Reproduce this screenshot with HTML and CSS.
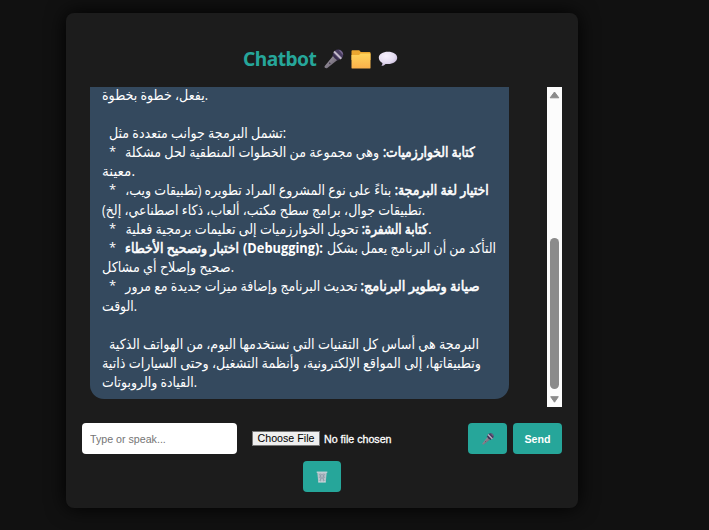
FILE: index.html
```
<!DOCTYPE html>
<html lang="en">
<head>
<meta charset="utf-8">
<title>Chatbot</title>
<link rel="stylesheet" href="styles.css">
</head>
<body>
<svg width="0" height="0" class="defs" aria-hidden="true">
  <defs>
    <linearGradient id="folder" x1="0" y1="0" x2="0" y2="1"><stop offset="0" stop-color="#ffd45c"/><stop offset="1" stop-color="#fbb04a"/></linearGradient>
    <radialGradient id="speech" cx=".4" cy=".3" r=".75"><stop offset="0" stop-color="#f7f1fd"/><stop offset=".6" stop-color="#e4dcf0"/><stop offset="1" stop-color="#bfaed2"/></radialGradient>
    <linearGradient id="handle" x1="0" y1="0" x2="1" y2="1"><stop offset="0" stop-color="#aaa2ad"/><stop offset="1" stop-color="#5f5866"/></linearGradient>
    <symbol id="mic" viewBox="0 0 20 20">
      <path d="M.6 17.3 9.2 6.8l4.2 4.1L3 19.2c-1 .6-3-.7-2.4-1.9z" fill="url(#handle)"/>
      <path d="M5.2 13.7l1.1 1" stroke="#423a4c" stroke-width="1.2"/>
      <circle cx="14.2" cy="5.6" r="5.1" fill="#493d61"/>
      <path d="M14.5.8a5 5 0 0 1 4.6 5.1l-1.7-1.6z" fill="#7a6b91"/>
      <path d="M10 2.5l7.3 7.3" stroke="#c4bacb" stroke-width="2"/>
      <path d="M8.8 5.6l5.5 5.7" stroke="#382c4c" stroke-width="1.6"/>
    </symbol>
  </defs>
</svg>
<main class="card">
  <h1 class="title"><span class="name">Chatbot</span>
    <svg class="i-mic" width="20" height="20"><use href="#mic"/></svg>
    <svg class="i-folder" width="20" height="19" viewBox="0 0 20 19"><path d="M.5 1.200Q.5.300 1.400.300h6.800l1.600 1.700h8.800q.9 0 .9.9V10H.5z" fill="#eba630"/><path d="M.5 5h7.500l1.600-1.500h9.900v14.600q0 .4-.4.400H.9q-.4 0-.4-.4z" fill="url(#folder)"/></svg>
    <svg class="i-speech" width="20" height="16" viewBox="0 0 20 16"><path d="M10 .8c5.2 0 9.2 2.5 9.2 6s-4 6.3-9.2 6.3c-.8 0-1.700-.1-2.400-.2C6.500 14.200 5 14.900 3.400 14.900c.7-.8 1.100-1.800 1-2.900C2.200 10.900.8 9 .8 6.800c0-3.500 4-6 9.200-6z" fill="url(#speech)"/></svg>
  </h1>
  <section class="chat">
    <div class="bubble">
      <p class="line"><span class="run" data-width="106">يفعل، خطوة بخطوة.</span></p>
      <p class="line"></p>
      <p class="line indent"><span class="run" data-width="177">تشمل البرمجة جوانب متعددة مثل:</span></p>
      <p class="line indent"><i>*</i><span class="rtl"><b class="run" data-width="92">كتابة الخوارزميات:</b><span class="run" data-width="254">وهي مجموعة من الخطوات المنطقية لحل مشكلة</span></span></p>
      <p class="line"><span class="run" data-width="33">معينة.</span></p>
      <p class="line indent"><i>*</i><span class="rtl"><b class="run" data-width="94">اختيار لغة البرمجة:</b><span class="run" data-width="266">بناءً على نوع المشروع المراد تطويره (تطبيقات ويب،</span></span></p>
      <p class="line"><span class="run" data-width="323">تطبيقات جوال، برامج سطح مكتب، ألعاب، ذكاء اصطناعي، إلخ)&rlm;.</span></p>
      <p class="line indent"><i>*</i><span class="rtl"><b class="run" data-width="66">كتابة الشفرة:</b><span class="run" data-width="233">تحويل الخوارزميات إلى تعليمات برمجية فعلية</span></span><span>.</span></p>
      <p class="line indent"><i>*</i><b class="run" data-width="114">اختبار وتصحيح الأخطاء</b><b class="run latin" data-width="80">(Debugging):</b><span class="run" data-width="169">التأكد من أن البرنامج يعمل بشكل</span></p>
      <p class="line"><span class="run" data-width="132">صحيح وإصلاح أي مشاكل.</span></p>
      <p class="line indent"><i>*</i><span class="rtl"><b class="run" data-width="119">صيانة وتطوير البرنامج:</b><span class="run" data-width="232">تحديث البرنامج وإضافة ميزات جديدة مع مرور</span></span></p>
      <p class="line"><span class="run" data-width="35">الوقت.</span></p>
      <p class="line"></p>
      <p class="line indent"><span class="run" data-width="370">البرمجة هي أساس كل التقنيات التي نستخدمها اليوم، من الهواتف الذكية</span></p>
      <p class="line"><span class="run" data-width="379">وتطبيقاتها، إلى المواقع الإلكترونية، وأنظمة التشغيل، وحتى السيارات ذاتية</span></p>
      <p class="line"><span class="run" data-width="95">القيادة والروبوتات.</span></p>
    </div>
    <div class="scrollbar">
      <svg width="11" height="8" viewBox="0 0 11 8"><path d="M5.500 1 9.800 6.800H1.200z" fill="#8b8b8b" stroke="#8b8b8b" stroke-linejoin="round"/></svg>
      <div class="thumb"></div>
      <svg width="9" height="7" viewBox="0 0 9 7"><path d="M4.500 6.200.700.700h7.600z" fill="#8b8b8b" stroke="#8b8b8b" stroke-linejoin="round"/></svg>
    </div>
  </section>
  <div class="controls">
    <input class="message" type="text" placeholder="Type or speak...">
    <div class="file"><button class="choose">Choose File</button><span class="status">No file chosen</span></div>
    <button class="btn voice"><svg width="12" height="12"><use href="#mic"/></svg></button>
    <button class="btn send">Send</button>
  </div>
  <button class="btn clear"><svg width="12" height="12" viewBox="0 0 12 12"><path d="M1.300 1.500h9.400L9.700 11.300H2.300z" fill="#b9c3cb"/><path d="M3 3l5.500 7M6 3l3 4M9 3l-5.500 7M6 3L3 7M4.200 2.500l.5 8.500M7.800 2.500l-.5 8.500" stroke="#8795a3" stroke-width=".6"/><path d="M.7 1.200h10.600" stroke="#d8d4dc" stroke-width="1.200"/><path d="M2.200 11h7.600" stroke="#d8dfe4" stroke-width=".8"/></svg></button>
</main>
<script src="fit.js"></script>
</body>
</html>
```
FILE: fit.js
```
// Condense each run of text to its set width.
document.querySelectorAll(".run").forEach(function (run) {
  var width = Number(run.dataset.width);
  var text = document.createElement("span");
  text.className = "text";
  text.append(...run.childNodes);
  run.append(text);
  var scale = width / text.getBoundingClientRect().width;
  run.style.width = width + "px";
  text.style.transform = "scaleX(" + scale + ")";
});
```
FILE: styles.css
```
* { box-sizing: border-box; }
body {
  margin: 0;
  height: 530px;
  overflow: hidden;
  background: #111;
  color: #fff;
  font-family: "Open Sans", "Noto Sans", "DejaVu Sans", sans-serif;
}
.defs { position: absolute; }
.card {
  width: 512px;
  height: 495px;
  margin: 13px 0 0 66px;
  padding: 33px 16px 16px;
  background: #1c1c1c;
  border-radius: 8px;
  box-shadow: 0 0 20px #000;
}
.title {
  display: flex;
  align-items: flex-start;
  height: 41px;
  margin: 0;
  padding-left: 161px;
  color: #26a69a;
  font: bold 19.2px/26px "Noto Sans", "Open Sans", sans-serif;
}
.name { width: 81px; white-space: nowrap; letter-spacing: -.55px; }
.i-mic { margin-top: 3px; }
.i-folder { margin: 4px 0 0 7px; }
.i-speech { margin: 5px 0 0 7px; }
.chat {
  display: flex;
  justify-content: space-between;
  height: 320px;
  padding-left: 8px;
  overflow: hidden;
}
.bubble {
  width: 419px;
  height: 312px;
  padding: 0 12px 7.5px;
  display: flex;
  flex-direction: column;
  justify-content: flex-end;
  background: #34495e;
  border-radius: 0 0 14px 14px;
  font-size: 14px;
}
.line {
  display: flex;
  flex: none;
  height: 19.2px;
  margin: 0;
  line-height: 19.2px;
  white-space: nowrap;
}
.line i { flex: none; width: 16px; font-style: normal; font-size: 13px; }
.indent { padding-left: 7px; }
.rtl { display: flex; flex-direction: row-reverse; gap: 4px; }
.rtl .run { direction: rtl; }
.run { display: block; flex: none; }
.text { display: inline-block; transform-origin: 0 50%; }
.rtl .text { transform-origin: 100% 50%; }
b { font-weight: normal; -webkit-text-stroke: .6px #fff; }
b + b, b + .run:last-child:not(.rtl .run) { margin-left: 4px; }
b.latin { font-weight: bold; -webkit-text-stroke: 0; }
.scrollbar {
  display: flex;
  flex-direction: column;
  align-items: center;
  width: 15px;
  padding: 4px 0;
  background: #fcfcfc;
}
.thumb {
  width: 9px;
  height: 151px;
  margin: auto 0 7px;
  border-radius: 5px;
  background: #8b8b8b;
}
.controls {
  display: flex;
  align-items: center;
  height: 31px;
  margin-top: 16px;
  font: 10.67px "Liberation Sans", Arial, sans-serif;
}
.message {
  width: 155px;
  height: 31px;
  padding: 0 8px;
  border: 0;
  border-radius: 4px;
  background: #fff;
  font: 10.67px "Liberation Sans", Arial, sans-serif;
}
.message::placeholder { color: #757575; }
.file { display: flex; align-items: center; width: 216px; margin-left: 15px; white-space: nowrap; }
.choose {
  width: 68px;
  height: 15px;
  margin-right: 4px;
  padding: 0;
  border: 1px solid #767676;
  background: #efefef;
  color: #000;
  font: 10.67px/13px "Liberation Sans", Arial, sans-serif;
}
.status { -webkit-text-stroke: .3px #fff; }
.btn {
  display: flex;
  align-items: center;
  justify-content: center;
  height: 31px;
  padding: 0;
  border: 0;
  border-radius: 4px;
  background: #26a69a;
  color: #fff;
  font: bold 10.67px "Liberation Sans", Arial, sans-serif;
}
.voice { width: 39px; }
.send { width: 49px; margin-left: 6px; }
.clear { width: 38px; margin: 7px 0 0 221px; }
```
